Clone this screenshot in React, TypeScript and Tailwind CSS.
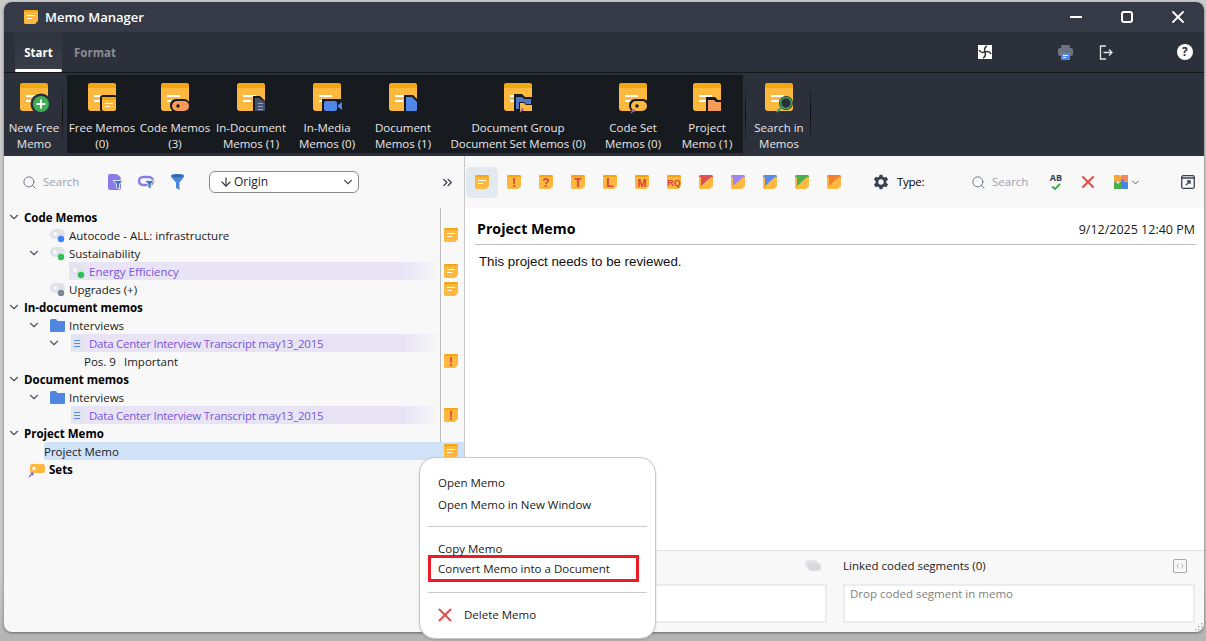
import type { ReactNode } from "react";
import { ArrowDown, ChevronDown, ChevronsRight, Search, X } from "lucide-react";

// big ribbon memo with an overlay drawn in the bottom right corner
const BigMemo = ({ children }: { children?: ReactNode }) => (
  <svg width="32" height="28" viewBox="0 0 32 28" className="overflow-visible mr-[-4px]">
    <rect x="0" y="0" width="28" height="28" rx="3" fill="#fdb93f" />
    <path d="M0 5V3a3 3 0 0 1 3-3h22a3 3 0 0 1 3 3v2z" fill="#f3a60f" />
    <rect x="6" y="12" width="13" height="2" fill="#fff" />
    <rect x="6" y="17" width="8" height="2" fill="#fff" />
    {children}
  </svg>
);

const ringed = "#171a1f";

const ribbonIcons: Record<string, ReactNode> = {
  free: (
    <g>
      <rect x="12" y="12" width="17" height="17" rx="3" fill={ringed} />
      <rect x="14" y="14" width="14" height="14" rx="2" fill="#fdb93f" />
      <rect x="14" y="14" width="14" height="3" fill="#f3a60f" />
      <rect x="17" y="20" width="8" height="1" fill="#fff" />
      <rect x="17" y="23" width="5" height="1" fill="#fff" />
    </g>
  ),
  code: (
    <g>
      <rect x="9" y="16" width="20" height="13" rx="6" fill={ringed} />
      <rect x="11" y="18" width="17" height="10" rx="5" fill="#f79b58" />
      <circle cx="17" cy="23" r="1.7" fill={ringed} />
    </g>
  ),
  indoc: (
    <g>
      <path d="M16 13h7l5 5v11H16z" fill={ringed} />
      <path d="M18 15h4l6 4v8a1 1 0 0 1-1 1h-9z" fill="#46526a" />
      <rect x="21" y="20" width="5" height="1" fill="#8fa6d8" />
      <rect x="21" y="23" width="5" height="1" fill="#8fa6d8" />
      <rect x="21" y="26" width="5" height="1" fill="#8fa6d8" />
    </g>
  ),
  media: (
    <g>
      <rect x="9" y="16" width="21" height="13" fill={ringed} />
      <rect x="11" y="18" width="13" height="10" rx="2" fill="#4f86e8" />
      <path d="M25 22l4-3v8l-4-3z" fill="#4f86e8" />
    </g>
  ),
  document: (
    <g>
      <path d="M15 12h9l6 6v12H15z" fill={ringed} />
      <path d="M17 14h6l5 5v8a1 1 0 0 1-1 1H17z" fill="#4f86e8" />
    </g>
  ),
  group: (
    <g>
      <path d="M10 11h8l3 3h7v15H10z" fill={ringed} />
      <path d="M12 14h6l2 2h7v10H12z" fill="#4f78c4" />
      <path d="M15 19h5l2 2h6v7H15z" fill={ringed} />
      <path d="M16 20h4l2 2h6v6H16z" fill="#fdb93f" />
      <path d="M16 29l3-3m-2 0h2v2" stroke="#9a5fd0" strokeWidth="1.2" fill="none" />
    </g>
  ),
  codeset: (
    <g>
      <rect x="10" y="16" width="20" height="13" rx="6" fill={ringed} />
      <rect x="12" y="18" width="16" height="10" rx="5" fill="#fdb93f" />
      <circle cx="18" cy="23" r="1.7" fill={ringed} />
      <path d="M12 30l3-3m-2.2 0H15v2" stroke="#9a5fd0" strokeWidth="1.3" fill="none" />
    </g>
  ),
  project: (
    <g>
      <path d="M13 14h9l3 3h5v12H13z" fill={ringed} />
      <path d="M15 17h6l2 2h5v9H15z" fill="#f79b58" />
    </g>
  ),
  searchm: (
    <g>
      <circle cx="21" cy="20" r="7" fill="#2b303a" />
      <circle cx="21" cy="20" r="5.5" fill="#2b303a" stroke="#3fa35a" strokeWidth="1.6" />
      <path d="M16.800 24.200L11.500 29" stroke="#3fa35a" strokeWidth="2" />
    </g>
  ),
  add: (
    <g>
      <circle cx="21" cy="21" r="10.5" fill="#2b303a" />
      <circle cx="21" cy="21" r="8" fill="#3fae55" />
      <path d="M21 16.5v9M16.5 21h9" stroke="#fff" strokeWidth="2" />
    </g>
  ),
};

const RibbonItem = ({ icon, lines, width }: { icon: string; lines: string[]; width: string }) => (
  <div className={`${width} flex flex-col items-center pt-[8px] shrink-0`}>
    <BigMemo>{ribbonIcons[icon]}</BigMemo>
    <div className="mt-[9px] text-center text-[11.5px] leading-[16px] text-[#e8e8e8] whitespace-nowrap">
      {lines.map((l) => (
        <div key={l}>{l}</div>
      ))}
    </div>
  </div>
);

const RibbonSep = () => (
  <div className="w-px h-[62px] mt-[10px] shrink-0 bg-gradient-to-b from-[#2b303a] via-[#0c0d10] to-[#2b303a]" />
);

// small note used in the toolbar and in the tree gutter
const SmallMemo = ({ letter, flag, size = 14 }: { letter?: string; flag?: string; size?: number }) => (
  <svg width={size} height={size} viewBox="0 0 14 14" className="shrink-0">
    <path d="M1.5 0h11A1.5 1.5 0 0 1 14 1.5V11l-3 3H1.5A1.5 1.5 0 0 1 0 12.5v-11A1.5 1.5 0 0 1 1.5 0z" fill="#fdb93f" />
    <path d="M0 2V1.5A1.5 1.5 0 0 1 1.5 0h11A1.5 1.5 0 0 1 14 1.5V2z" fill={flag ?? "#f3a60f"} />
    {flag && <path d="M2 2h10L2 11z" fill={flag} />}
    {!flag && !letter && (
      <g fill="#fff">
        <rect x="3" y="5" width="8" height="1" />
        <rect x="3" y="8" width="5" height="1" />
      </g>
    )}
    {letter && (
      <text
        x="7"
        y={letter.length > 1 ? 10.5 : 11.5}
        textAnchor="middle"
        fontSize={letter.length > 1 ? 9 : letter === "M" ? 11 : 12}
        fontWeight="700"
        fontFamily="Liberation Sans"
        fill="#d8443f"
      >
        {letter}
      </text>
    )}
  </svg>
);

const CodeTag = ({ dot }: { dot: string }) => (
  <svg width="16" height="15" viewBox="0 0 16 15" className="shrink-0 mt-[1px]">
    <rect x="0" y="1" width="15" height="10" rx="5" fill="#dfe3e8" />
    <circle cx="5" cy="6" r="2" fill="#f8f8f8" />
    <circle cx="11" cy="11" r="3.2" fill={dot} />
  </svg>
);

const Folder = () => (
  <svg width="15" height="13" viewBox="0 0 15 13" className="shrink-0">
    <path d="M0 1.5A1.5 1.5 0 0 1 1.5 0H6l1.5 2H15v9.5a1.5 1.5 0 0 1-1.5 1.5h-12A1.5 1.5 0 0 1 0 11.500z" fill="#4f86e0" />
  </svg>
);

const DocIcon = () => (
  <svg width="12" height="14" viewBox="0 0 12 14" className="shrink-0">
    <path d="M2 0h6l4 4v8a2 2 0 0 1-2 2H2a2 2 0 0 1-2-2V2a2 2 0 0 1 2-2z" fill="#dfe5ee" />
    <g fill="#5b8ae0">
      <rect x="3" y="4" width="6" height="1" />
      <rect x="3" y="7" width="6" height="1" />
      <rect x="3" y="10" width="6" height="1" />
    </g>
  </svg>
);

const Caret = ({ className = "" }: { className?: string }) => (
  <ChevronDown size={14} strokeWidth={2} className={`shrink-0 text-[#4b5563] ${className}`} />
);

const Gutter = ({ memo }: { memo?: "note" | "alert" }) => (
  <div className="w-[24px] h-full shrink-0 border-l border-[#bdbdbd] flex items-center pl-[3px]">
    {memo === "note" && <SmallMemo />}
    {memo === "alert" && <SmallMemo letter="!" />}
  </div>
);

const Row = ({ children, memo }: { children: ReactNode; memo?: "note" | "alert" }) => (
  <div className="flex h-[18px] items-center">
    <div className="w-[436px] h-full flex items-center shrink-0 whitespace-nowrap">{children}</div>
    <Gutter memo={memo} />
  </div>
);

const Heading = ({ label }: { label: string }) => (
  <Row>
    <Caret className="ml-[3px]" />
    <span className="ml-[3px] font-bold text-black">{label}</span>
  </Row>
);

const highlight = "bg-gradient-to-r from-[#e8e4f6] from-90% to-[#f8f8f8]";

const Tree = () => (
  <div className="text-[11.5px] text-[#1a1a1a] [&_span]:pt-[2px]">
    <Heading label="Code Memos" />
    <Row memo="note">
      <div className="ml-[46px] w-[19px]"><CodeTag dot="#3b82f6" /></div>
      <span>Autocode - ALL: infrastructure</span>
    </Row>
    <Row>
      <Caret className="ml-[23px]" />
      <div className="ml-[9px] w-[19px]"><CodeTag dot="#2fbf55" /></div>
      <span>Sustainability</span>
    </Row>
    <Row memo="note">
      <div className={`ml-[65px] h-full flex-1 flex items-center ${highlight}`}>
        <div className="ml-[1px] w-[19px]"><CodeTag dot="#2fbf55" /></div>
        <span className="text-[#7a55d6]">Energy Efficiency</span>
      </div>
    </Row>
    <Row memo="note">
      <div className="ml-[46px] w-[19px]"><CodeTag dot="#7b8794" /></div>
      <span>Upgrades (+)</span>
    </Row>
    <Heading label="In-document memos" />
    <Row>
      <Caret className="ml-[23px]" />
      <div className="ml-[9px] w-[19px]"><Folder /></div>
      <span>Interviews</span>
    </Row>
    <Row>
      <Caret className="ml-[43px]" />
      <div className={`ml-[10px] h-full flex-1 flex items-center ${highlight}`}>
        <div className="w-[18px]"><DocIcon /></div>
        <span className="text-[#7a55d6] tracking-[-0.23px]">Data Center Interview Transcript may13_2015</span>
      </div>
    </Row>
    <Row memo="alert">
      <span className="ml-[80px] w-[40px]">Pos. 9</span>
      <span>Important</span>
    </Row>
    <Heading label="Document memos" />
    <Row>
      <Caret className="ml-[23px]" />
      <div className="ml-[9px] w-[19px]"><Folder /></div>
      <span>Interviews</span>
    </Row>
    <Row memo="alert">
      <div className={`ml-[67px] h-full flex-1 flex items-center ${highlight}`}>
        <div className="w-[18px]"><DocIcon /></div>
        <span className="text-[#7a55d6] tracking-[-0.23px]">Data Center Interview Transcript may13_2015</span>
      </div>
    </Row>
    <Heading label="Project Memo" />
    <div className="flex h-[18px] items-center ml-[40px] bg-[#cfe2f8] rounded-l-[3px]">
      <span className="w-[396px] shrink-0">Project Memo</span>
      <div className="pl-[4px] h-full flex items-start pt-[2px] overflow-hidden"><SmallMemo /></div>
    </div>
    <div className="flex h-[18px] items-center">
      <svg width="18" height="14" viewBox="0 0 18 14" className="ml-[24px] mt-[4px] shrink-0">
        <rect x="2" y="0" width="15" height="9" rx="2.5" fill="#fdb93f" />
        <circle cx="6" cy="4.500" r="1.700" fill="#fff" />
        <path d="M1 13l4-4M2.500 9H5v2.500" stroke="#8b55d6" strokeWidth="1.100" fill="none" />
      </svg>
      <span className="ml-[3px] font-bold text-black">Sets</span>
    </div>
  </div>
);

const LeftToolbar = () => (
  <div className="h-[52px] shrink-0 flex items-center pl-[18px]">
    <Search size={15} strokeWidth={1.5} className="text-[#6b7280]" />
    <span className="ml-[6px] w-[65px] text-[11.5px] text-[#9ca3af]">Search</span>
    <svg width="15" height="16" viewBox="0 0 15 16" className="shrink-0">
      <path d="M2 0h5a6 6 0 0 1 6 6v8a2 2 0 0 1-2 2H2a2 2 0 0 1-2-2V2a2 2 0 0 1 2-2z" fill="#8b7be8" />
      <path d="M5 6.500h10l-3.500 3.500v5l-3-1.500V10z" fill="#3f78c4" stroke="#f8f8f8" strokeWidth="0.800" />
    </svg>
    <svg width="17" height="16" viewBox="0 0 17 16" className="ml-[15px] shrink-0">
      <rect x="1" y="3" width="14" height="8" rx="4" fill="none" stroke="#8b7be8" strokeWidth="2.400" />
      <path d="M6.500 6.500h10L13 10v5l-3-1.500V10z" fill="#3f78c4" stroke="#f8f8f8" strokeWidth="0.800" />
    </svg>
    <svg width="13" height="16" viewBox="0 0 13 16" className="ml-[16px] shrink-0">
      <path d="M0 1.500C0 .5 3 0 6.500 0S13 .5 13 1.500V3L8.500 8.500V16L5 14V8.500L0 3z" fill="#4a86d8" />
      <ellipse cx="6.500" cy="1.800" rx="5.500" ry="1.500" fill="#3566a8" />
    </svg>
    <div className="ml-[25px] w-[150px] h-[22px] border border-[#8a8a8a] rounded-[6px] bg-white flex items-center pl-[9px] pr-[3px] text-[12px] text-[#222]">
      <ArrowDown size={14} strokeWidth={2} className="text-[#333]" />
      <span className="ml-[1px] flex-1">Origin</span>
      <ChevronDown size={14} className="text-[#555]" />
    </div>
    <ChevronsRight size={15} strokeWidth={2.2} className="ml-[81px] text-[#374151]" />
  </div>
);

const noteTools: { letter?: string; flag?: string }[] = [
  {},
  { letter: "!" },
  { letter: "?" },
  { letter: "T" },
  { letter: "L" },
  { letter: "M" },
  { letter: "RQ" },
  { flag: "#e04f4f" },
  { flag: "#9a86f0" },
  { flag: "#5b8ae8" },
  { flag: "#4caf50" },
  { flag: "#f08030" },
];

const RightToolbar = () => (
  <div className="h-[52px] shrink-0 flex items-center pl-[1px] text-[11.5px]">
    {noteTools.map((t, i) => (
      <div
        key={i}
        className={`w-[32px] h-[31px] flex items-center justify-center shrink-0 rounded-[5px] ${i === 0 ? "bg-[#e3e9f1]" : ""}`}
      >
        <SmallMemo letter={t.letter} flag={t.flag} />
      </div>
    ))}
    <svg width="16" height="16" viewBox="0 0 24 24" className="ml-[23px] shrink-0" fill="#374151">
      <path d="M20 13.500a8 8 0 0 0 0-3l2.600-2-2.500-4.300-3 1.200a8 8 0 0 0-2.500-1.500L14.100 1H9.900l-.5 2.900a8 8 0 0 0-2.500 1.500l-3-1.200-2.500 4.300 2.600 2a8 8 0 0 0 0 3l-2.600 2 2.500 4.300 3-1.200a8 8 0 0 0 2.500 1.500l.5 2.900h4.200l.5-2.900a8 8 0 0 0 2.500-1.500l3 1.200 2.500-4.300zM12 16a4 4 0 1 1 0-8 4 4 0 0 1 0 8z" />
    </svg>
    <span className="ml-[8px] w-[74px] text-black tracking-[-0.3px]">Type:</span>
    <Search size={15} strokeWidth={1.5} className="text-[#6b7280] shrink-0" />
    <span className="ml-[6px] w-[56px] text-[#9ca3af]">Search</span>
    <div className="relative w-[16px] h-[18px] shrink-0 flex flex-col items-center">
      <span className="text-[9px] leading-[10px] font-bold text-[#374151]">AB</span>
      <svg width="10" height="7" viewBox="0 0 10 7"><path d="M1 3.500L4 6l5-5" fill="none" stroke="#3fae55" strokeWidth="2" /></svg>
    </div>
    <X size={20} strokeWidth={2.5} className="ml-[14px] text-[#e0504f] shrink-0" />
    <svg width="14" height="14" viewBox="0 0 14 14" className="ml-[16px] shrink-0">
      <path d="M0 0h6a1.500 1.500 0 0 0 3 0h5v7H9a1.500 1.500 0 0 1-3 0H0z" fill="#f6a63c" />
      <rect x="7" y="0" width="7" height="6" fill="#f08a5a" />
      <path d="M0 7h2.500a1.500 1.500 0 0 0 3 0H7v7H0z" fill="#4caf50" />
      <path d="M7 5.500a1.500 1.500 0 0 1 3 0V7h4v7H7z" fill="#4a86e0" />
    </svg>
    <ChevronDown size={11} strokeWidth={2} className="ml-[2px] text-[#4b5563] shrink-0" />
    <svg width="14" height="14" viewBox="0 0 14 14" className="ml-[40px] shrink-0" fill="none" stroke="#374151" strokeWidth="1.300">
      <rect x="0.700" y="0.700" width="12.600" height="12.600" rx="1.500" />
      <path d="M0.700 3h12.600" />
      <path d="M5 10l4-4M6 6h3v3" />
    </svg>
  </div>
);

const ContextMenu = () => (
  <div className="absolute left-[419px] top-[457px] w-[237px] h-[182px] rounded-[16px] border border-[#c8c8c8] bg-white text-[11.5px] text-[#1a1a1a] px-[8px] pt-[14px] shadow-sm">
    <div className="h-[22px] leading-[22px] pl-[10px]">Open Memo</div>
    <div className="h-[22px] leading-[22px] pl-[10px]">Open Memo in New Window</div>
    <div className="mt-[10px] mb-[11px] h-px bg-[#c9c9d0]" />
    <div className="h-[22px] leading-[22px] pl-[10px]">Copy Memo</div>
    <div className="h-[27px] w-[211px] -mt-[5px] border-[3px] border-[#ed1c24] leading-[21px] pl-[7px]">
      Convert Memo into a Document
    </div>
    <div className="mt-[10px] mb-[11px] h-px bg-[#c9c9d0]" />
    <div className="h-[22px] flex items-center pl-[6px]">
      <X size={22} strokeWidth={2.2} className="text-[#e0504f] shrink-0" />
      <span className="ml-[8px]">Delete Memo</span>
    </div>
  </div>
);

export default function App() {
  return (
    <div className="relative w-[1206px] h-[641px] overflow-hidden bg-gradient-to-b from-[#cacaca] from-90% to-[#b4b4b4] pl-[4px] pr-[2px] pt-[2px] font-['Open_Sans',sans-serif]">
      <div className="relative w-[1200px] h-[630px] rounded-[8px] overflow-hidden flex flex-col bg-[#f8f8f8] shadow-[0_1px_3px_rgba(0,0,0,0.45)]">
        {/* Title bar */}
        <div className="h-[30px] shrink-0 bg-[#353a46] flex items-center pl-[20px]">
          <SmallMemo />
          <span className="ml-[7px] mt-[2px] text-[13px] font-semibold text-white">Memo Manager</span>
          <svg width="12" height="2" viewBox="0 0 12 2" className="ml-auto"><rect width="12" height="2" fill="#fff" /></svg>
          <svg width="12" height="12" viewBox="0 0 12 12" className="ml-[39px]"><rect x="1" y="1" width="10" height="10" rx="2" fill="none" stroke="#fff" strokeWidth="2" /></svg>
          <X size={20} strokeWidth={2.2} className="ml-[35px] mr-[16px] text-white" />
        </div>

        {/* Tabs */}
        <div className="h-[41px] shrink-0 bg-[#2b303a] border-b border-[#14161a] flex items-start pl-[11px] text-[11.5px] font-bold">
          <div className="w-[47px] h-[40px] bg-gradient-to-b from-[#2f343e] to-[#3a3e48] text-white flex flex-col items-center justify-between">
            <span className="mt-[12px]">Start</span>
            <div className="w-full h-[3px] rounded-full bg-white" />
          </div>
          <span className="ml-[12px] mt-[12px] text-[#8a8d93]">Format</span>
          <svg width="14" height="14" viewBox="0 0 14 14" className="ml-[862px] mt-[13px]">
            <rect width="14" height="14" fill="#fff" />
            <path d="M7 7C6 4 7 2 9 1M7 7c3-1 5 0 6 2M7 7c1 3 0 5-2 6M7 7C4 8 2 7 1 5" fill="none" stroke="#333" strokeWidth="1.500" />
          </svg>
          <svg width="15" height="15" viewBox="0 0 15 15" className="ml-[66px] mt-[13px]">
            <rect x="3" y="0" width="9" height="3" rx="1" fill="#6b7280" />
            <rect x="0" y="3" width="15" height="8" rx="2" fill="#6b7280" />
            <rect x="3" y="8" width="9" height="7" fill="#4f86e8" />
            <rect x="5" y="10" width="5" height="1" fill="#fff" />
            <rect x="5" y="12" width="3" height="1" fill="#fff" />
          </svg>
          <svg width="14" height="15" viewBox="0 0 14 15" className="ml-[26px] mt-[13px]" fill="none" stroke="#e5e7eb" strokeWidth="1.300">
            <path d="M7 1H1.500v13H7" />
            <path d="M4.500 7.500H13M10 4.500l3 3-3 3" />
          </svg>
          <div className="ml-[64px] mt-[12px] w-[16px] h-[16px] rounded-full bg-white text-[#2b303a] text-[12px] leading-[16px] text-center font-bold">?</div>
        </div>

        {/* Ribbon */}
        <div className="h-[83px] shrink-0 bg-[#2b303a] flex">
          <div className="mt-[2px] flex">
            <RibbonItem icon="add" lines={["New Free", "Memo"]} width="w-[60px]" />
          </div>
          <div className="-ml-[2px]"><RibbonSep /></div>
          <div className="w-[4px]" />
          <div className="h-[78px] mt-[2px] bg-[#171a1f] flex">
            <RibbonItem icon="free" lines={["Free Memos", "(0)"]} width="w-[71px] pr-[1px]" />
            <RibbonItem icon="code" lines={["Code Memos", "(3)"]} width="w-[74px]" />
            <RibbonItem icon="indoc" lines={["In-Document", "Memos (1)"]} width="w-[78px]" />
            <RibbonItem icon="media" lines={["In-Media", "Memos (0)"]} width="w-[74px]" />
            <RibbonItem icon="document" lines={["Document", "Memos (1)"]} width="w-[78px]" />
            <RibbonItem icon="group" lines={["Document Group", "Document Set Memos (0)"]} width="w-[152px]" />
            <RibbonItem icon="codeset" lines={["Code Set", "Memos (0)"]} width="w-[78px]" />
            <RibbonItem icon="project" lines={["Project", "Memo (1)"]} width="w-[71px] pr-[1px]" />
          </div>
          <div className="w-[2px]" />
          <RibbonSep />
          <div className="w-[2px]" />
          <div className="mt-[2px] flex">
            <RibbonItem icon="searchm" lines={["Search in", "Memos"]} width="w-[62px]" />
          </div>
          <RibbonSep />
        </div>

        {/* Body */}
        <div className="flex-1 flex min-h-0">
          <div className="w-[461px] shrink-0 border-r border-[#c8c8c8] flex flex-col">
            <LeftToolbar />
            <Tree />
          </div>
          <div className="flex-1 flex flex-col min-w-0">
            <RightToolbar />
            <div className="flex-1 bg-white pl-[10px] pr-[8px] pt-[10px] border-b border-[#e4e4e4]">
              <div className="h-[27px] flex items-center justify-between pl-[2px] pb-[5px] border-b border-[#bdbdbd]">
                <span className="text-[14.2px] font-bold text-black">Project Memo</span>
                <span className="text-[12.500px] mt-[4px] mr-[1px] text-[#1a1a1a]">9/12/2025 12:40 PM</span>
              </div>
              <div className="mt-[8px] pl-[4px] text-[13.300px] leading-[18px] font-['Liberation_Sans',sans-serif] text-[#111]">
                This project needs to be reviewed.
              </div>
            </div>
            <div className="h-[81px] shrink-0 flex gap-[16px] pl-[10px] pr-[9px]">
              <div className="flex-1 flex flex-col">
                <div className="h-[33px] pb-[4px] flex items-center justify-end pr-[6px]">
                  <svg width="16" height="12" viewBox="0 0 16 12">
                    <rect x="0" y="0" width="13" height="8" rx="4" fill="#e2e4e7" />
                    <rect x="3" y="3" width="13" height="8" rx="4" fill="#d8dade" />
                  </svg>
                </div>
                <div className="h-[39px] border-2 border-[#ececec] bg-white" />
              </div>
              <div className="flex-1 flex flex-col">
                <div className="h-[33px] pb-[4px] flex items-center justify-between text-[11.5px] text-[#1a1a1a]">
                  <span>Linked coded segments (0)</span>
                  <svg width="14" height="14" viewBox="0 0 14 14" className="mr-[8px]" fill="none">
                    <rect x="0.500" y="0.500" width="13" height="13" rx="1.500" stroke="#a8a8a8" />
                    <path d="M5.500 4.500L4 7l1.500 2.500M8.500 4.500L10 7l-1.500 2.500" stroke="#b8b8b8" strokeWidth="1" />
                  </svg>
                </div>
                <div className="h-[39px] border-2 border-[#ececec] bg-white px-[5px] text-[11.5px] leading-[16px] text-[#808080]">
                  Drop coded segment in memo
                </div>
              </div>
            </div>
          </div>
        </div>
        {/* resize grip */}
        <svg width="8" height="8" viewBox="0 0 8 8" className="absolute right-[1px] bottom-[1px]" fill="#b0b0b0">
          <rect x="6" y="0" width="1.500" height="1.500" />
          <rect x="3" y="3" width="1.500" height="1.500" />
          <rect x="6" y="3" width="1.500" height="1.500" />
          <rect x="0" y="6" width="1.500" height="1.500" />
          <rect x="3" y="6" width="1.500" height="1.500" />
          <rect x="6" y="6" width="1.500" height="1.500" />
        </svg>
      </div>
      <ContextMenu />
    </div>
  );
}
